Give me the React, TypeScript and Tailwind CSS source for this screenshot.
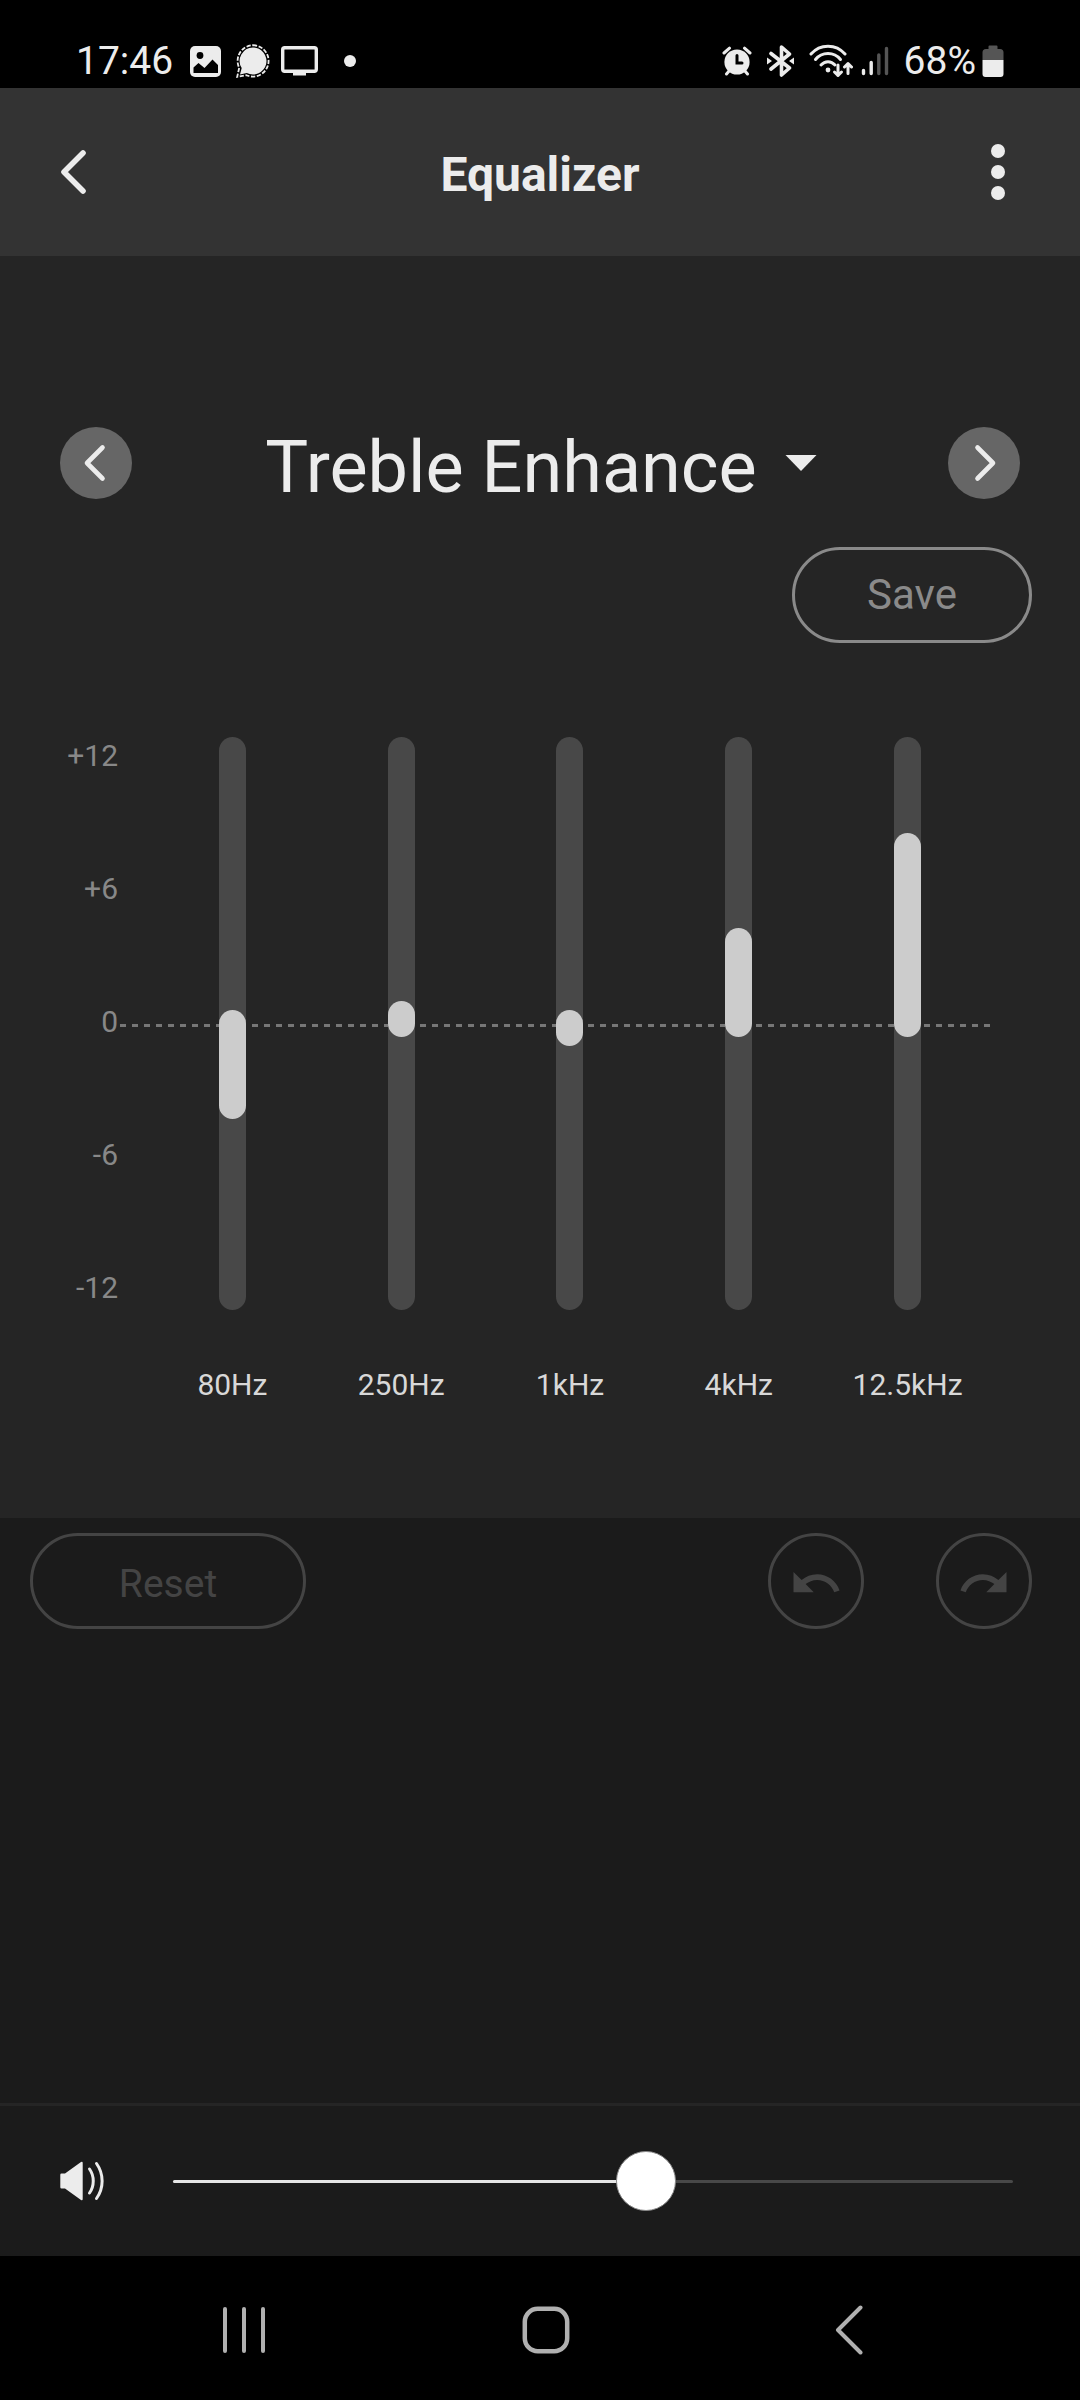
import { useState } from "react";

type Band = { id: string; label: string; gain: number };

const PRESETS = ["Treble Enhance", "Bass Enhance", "Flat"];

const INITIAL_BANDS: Band[] = [
  { id: "band-80", label: "80Hz", gain: -3.6 },
  { id: "band-250", label: "250Hz", gain: 0.4 },
  { id: "band-1k", label: "1kHz", gain: -0.4 },
  { id: "band-4k", label: "4kHz", gain: 3.6 },
  { id: "band-12k", label: "12.5kHz", gain: 7.8 },
];

const GAIN_LABELS = ["+12", "+6", "0", "-6", "-12"];

// track is 573px tall with 27px round caps, so 273px of travel each way
const TRAVEL = 273;
const CAP = 27;

function StatusBar() {
  return (
    <div className="flex h-[88px] items-center justify-between bg-black pt-[34px] pr-[76px] pl-[76px] text-[39px] leading-none text-[#ececec]">
      <div className="flex items-center">
        <span>17:46</span>
        <svg className="ml-[17px]" width="31" height="31" viewBox="0 0 31 31">
          <rect width="31" height="31" rx="5" fill="#ececec" />
          <circle cx="10" cy="9.5" r="3.4" fill="#000" />
          <path d="M3.5 27V21.5L8.5 17L14.5 22L22.5 13.5L28 19V27Z" fill="#000" />
        </svg>
        <svg className="ml-[15px]" width="34" height="34" viewBox="0 0 34 34">
          <path
            d="M17 3.5a13.5 13.5 0 1 1-6.2 25.5L4 30.5l1.7-6.4A13.5 13.5 0 0 1 17 3.5Z"
            fill="#ececec"
          />
          <path
            d="M17 1.2a15.7 15.7 0 1 1-6.6 30L1.2 32.8l2-9A15.7 15.7 0 0 1 17 1.2Z"
            fill="none"
            stroke="#ececec"
            strokeWidth="1.8"
            strokeDasharray="4.2 1.6"
          />
        </svg>
        <svg className="ml-[11px]" width="37" height="30" viewBox="0 0 37 30">
          <rect x="1.7" y="1.7" width="33.6" height="23.6" rx="2" fill="none" stroke="#ececec" strokeWidth="3.4" />
          <rect x="12" y="25" width="13" height="4.5" fill="#ececec" />
        </svg>
        <span className="ml-[26px] size-3 rounded-full bg-[#ececec]" />
      </div>

      <div className="flex items-center">
        <svg width="30" height="30" viewBox="0 0 30 30">
          <circle cx="15" cy="16" r="12.6" fill="#ececec" />
          <path
            d="M2 7L7.5 2.2M28 7L22.5 2.2M4.5 28l3-3.5M25.5 28l-3-3.5"
            stroke="#ececec"
            strokeWidth="3"
            strokeLinecap="round"
          />
          <path d="M15 9.5V17H20" fill="none" stroke="#000" strokeWidth="3" strokeLinecap="round" />
        </svg>
        <svg className="ml-[15px]" width="27" height="32" viewBox="0 0 27 32">
          <path
            d="M4 8.500L22.500 23L14.500 30V2L22.500 9L4 24"
            fill="none"
            stroke="#ececec"
            strokeWidth="3.6"
            strokeLinecap="round"
            strokeLinejoin="round"
          />
          <path d="M0 12.5L5 16L0 19.5ZM27 12.5L22 16L27 19.5Z" fill="#ececec" />
        </svg>
        <svg className="ml-[15px]" width="44" height="34" viewBox="0 0 44 34">
          <g fill="none" stroke="#ececec" strokeWidth="3" strokeLinecap="round" strokeLinejoin="round">
            <path d="M2 10C11 -.5 27 -.5 36 10" />
            <path d="M6.5 15.5C13 7.5 25 7.5 31.5 15.5" />
            <path d="M12 21C16 16.5 22 16.5 26 21" />
            <path d="M29 21V31.5M25.5 28L29 31.5L32.5 28" />
            <path d="M39 29.5V19.5M35.5 23L39 19.5L42.5 23" />
          </g>
          <circle cx="19" cy="26" r="2.4" fill="#ececec" />
        </svg>
        <svg className="ml-[8px]" width="29" height="30" viewBox="0 0 29 30">
          <g strokeWidth="3.4" strokeLinecap="round">
            <path d="M2.5 24.5V27.5M10.2 16.5V27.5" stroke="#ececec" />
            <path d="M17.8 9V27.5M25.5 2.5V27.5" stroke="#555" />
          </g>
        </svg>
        <span className="ml-[14px]">68%</span>
        <svg className="ml-[6px]" width="22" height="33" viewBox="0 0 22 33">
          <path d="M6.5 1.5a1 1 0 0 1 1-1h7a1 1 0 0 1 1 1V4H18a3.5 3.5 0 0 1 3.5 3.5V15H.5V7.5A3.5 3.5 0 0 1 4 4h2.5Z" fill="#555" />
          <path d="M.5 15h21v14a3 3 0 0 1-3 3h-15a3 3 0 0 1-3-3Z" fill="#ececec" />
        </svg>
      </div>
    </div>
  );
}

function Header() {
  return (
    <header className="flex h-[168px] items-center justify-between bg-[#333] px-[60px] text-[#ececec]">
      <button type="button" aria-label="Back" className="w-[44px]">
        <svg width="28" height="46" viewBox="0 0 28 46">
          <path d="M23 4L4 23L23 42" fill="none" stroke="currentColor" strokeWidth="5.6" strokeLinecap="round" strokeLinejoin="round" />
        </svg>
      </button>
      <h1 className="pt-1.5 text-[48px] leading-none font-bold">Equalizer</h1>
      <button type="button" aria-label="More options" className="flex w-[44px] flex-col items-center gap-[7px]">
        <span className="size-[14px] rounded-full bg-current" />
        <span className="size-[14px] rounded-full bg-current" />
        <span className="size-[14px] rounded-full bg-current" />
      </button>
    </header>
  );
}

function StepButton({ label, path, onClick }: { label: string; path: string; onClick: () => void }) {
  return (
    <button
      type="button"
      aria-label={label}
      onClick={onClick}
      className="flex size-[72px] shrink-0 items-center justify-center rounded-full bg-[#666]"
    >
      <svg width="28" height="40" viewBox="0 0 28 40">
        <path d={path} fill="none" stroke="#ececec" strokeWidth="4.6" strokeLinecap="round" strokeLinejoin="round" />
      </svg>
    </button>
  );
}

function BandSlider({ band, onChange }: { band: Band; onChange: (gain: number) => void }) {
  const size = (Math.abs(band.gain) / 12) * TRAVEL;
  const top = band.gain > 0 ? TRAVEL - size : TRAVEL;

  return (
    <div className="flex flex-col items-center">
      <div className="relative h-[573px] w-[27px] overflow-hidden rounded-full bg-[#484848]">
        <div
          className="absolute w-full rounded-full bg-[#ccc]"
          style={{ top, height: size + CAP }}
        />
        <input
          id={band.id}
          type="range"
          min={-12}
          max={12}
          step={0.1}
          value={band.gain}
          onChange={(e) => onChange(Number(e.target.value))}
          className="absolute inset-0 h-full w-full opacity-0 [direction:rtl] [writing-mode:vertical-lr]"
        />
      </div>
      <label htmlFor={band.id} className="mt-[57px] text-[30px] leading-9 text-[#d8d8d8]">
        {band.label}
      </label>
    </div>
  );
}

function VolumeBar() {
  const [volume, setVolume] = useState(56.25);

  return (
    <div className="flex h-[153px] items-center border-t-3 border-[#252525] pr-[67px] pl-[60px]">
      <label htmlFor="volume" aria-label="Volume" className="mr-[69px]">
        <svg width="44" height="40" viewBox="0 0 44 40">
          <path d="M1.5 12.5H5L21 1Q22.7 0 22.7 2V38Q22.7 40 21 39L5 27.5H1.5Q.3 27.5 .3 26.3V13.7Q.3 12.5 1.5 12.5Z" fill="#ececec" />
          <g fill="none" stroke="#ececec" strokeWidth="3" strokeLinecap="round">
            <path d="M29.5 8C34.5 15 34.5 25 29.5 32" />
            <path d="M36.5 2.5C44 13 44 27 36.5 37.5" />
          </g>
        </svg>
      </label>
      <div className="relative flex-1">
        <div className="h-[3px] rounded-full bg-[#484848]">
          <div className="h-full rounded-full bg-[#e6e6e6]" style={{ width: `${volume}%` }} />
        </div>
        {/* overhangs by half a thumb so the thumb centre runs the full line */}
        <div className="absolute -inset-x-[30px] -inset-y-[30px] flex items-center">
          <input
            id="volume"
            type="range"
            min={0}
            max={100}
            step={0.25}
            value={volume}
            onChange={(e) => setVolume(Number(e.target.value))}
            className="h-[60px] w-full appearance-none bg-transparent outline-none [&::-webkit-slider-thumb]:size-[60px] [&::-webkit-slider-thumb]:appearance-none [&::-webkit-slider-thumb]:rounded-full [&::-webkit-slider-thumb]:border [&::-webkit-slider-thumb]:border-[#888] [&::-webkit-slider-thumb]:bg-white"
          />
        </div>
      </div>
    </div>
  );
}

function NavBar() {
  return (
    <nav className="grid h-[144px] grid-cols-3 bg-black pr-[80px] pl-[93px] text-[#b0b0b0]">
      <button type="button" aria-label="Recent apps" className="flex items-center justify-center pt-1">
        <svg width="44" height="48" viewBox="0 0 44 48">
          <path d="M3 3V45M22 3V45M41 3V45" stroke="currentColor" strokeWidth="4" strokeLinecap="round" />
        </svg>
      </button>
      <button type="button" aria-label="Home" className="flex items-center justify-center pt-1">
        <svg width="48" height="48" viewBox="0 0 48 48">
          <rect x="2.8" y="2.8" width="42.4" height="42.4" rx="13" fill="none" stroke="currentColor" strokeWidth="4.5" />
        </svg>
      </button>
      <button type="button" aria-label="Back" className="flex items-center justify-center pt-1">
        <svg width="28" height="50" viewBox="0 0 28 50">
          <path d="M25.5 2.5L3 25L25.5 47.5" fill="none" stroke="currentColor" strokeWidth="4" strokeLinecap="round" strokeLinejoin="round" />
        </svg>
      </button>
    </nav>
  );
}

export default function App() {
  const [preset, setPreset] = useState(0);
  const [bands, setBands] = useState(INITIAL_BANDS);

  const stepPreset = (by: number) => setPreset((preset + by + PRESETS.length) % PRESETS.length);
  const setGain = (id: string, gain: number) =>
    setBands(bands.map((b) => (b.id === id ? { ...b, gain } : b)));

  return (
    <div className="flex min-h-screen flex-col bg-[#1b1b1b] font-['Roboto',sans-serif]">
      <StatusBar />
      <Header />

      <main className="flex flex-1 flex-col">
        <section className="bg-[#252525] pt-[171px] pb-[115px]">
          <div className="flex h-[72px] items-center justify-between px-[60px]">
            <StepButton label="Previous preset" path="M20.5 4.5L5 20L20.5 35.5" onClick={() => stepPreset(-1)} />
            <div className="flex items-center gap-[28px] pl-[2px] text-[#ececec]">
              <select
                aria-label="Preset"
                value={preset}
                onChange={(e) => setPreset(Number(e.target.value))}
                className="appearance-none bg-transparent pt-2.5 text-[72px] leading-[84px] outline-none [field-sizing:content]"
              >
                {PRESETS.map((name, i) => (
                  <option key={name} value={i}>
                    {name}
                  </option>
                ))}
              </select>
              <svg width="32" height="16" viewBox="0 0 32 16">
                <path d="M.5 0H31.5L16 16Z" fill="currentColor" />
              </svg>
            </div>
            <StepButton label="Next preset" path="M7.5 4.5L23 20L7.5 35.5" onClick={() => stepPreset(1)} />
          </div>

          <div className="flex justify-end pt-12 pr-12">
            <button
              type="button"
              className="h-24 w-[240px] rounded-full border-3 border-[#8a8a8a] text-[42px] leading-none text-[#8a8a8a]"
            >
              Save
            </button>
          </div>

          <div className="relative mt-[94px] flex pr-[88px]">
            <div className="absolute top-[287px] right-[90px] left-[120px] h-[3px] bg-[repeating-linear-gradient(90deg,#777_0_6px,transparent_6px_12px)]" />
            <div className="flex h-[573px] w-[148px] flex-col justify-between pt-px pr-[30px] pb-1 text-right text-[30px] leading-9 text-[#888]">
              {GAIN_LABELS.map((label) => (
                <span key={label}>{label}</span>
              ))}
            </div>
            <div className="grid flex-1 grid-cols-5">
              {bands.map((band) => (
                <BandSlider key={band.id} band={band} onChange={(gain) => setGain(band.id, gain)} />
              ))}
            </div>
          </div>
        </section>

        <div className="flex items-center justify-between pt-[15px] pr-12 pl-[30px] text-[#444]">
          <button
            type="button"
            className="h-24 w-[276px] rounded-full border-3 border-current pt-1.5 text-[39px] leading-none"
          >
            Reset
          </button>
          <div className="flex gap-[72px]">
            <button
              type="button"
              aria-label="Undo"
              className="flex size-24 items-center justify-center rounded-full border-3 border-current"
            >
              <svg width="54" height="54" viewBox="0 -1 24 24" fill="currentColor">
                <path d="M12.5 8c-2.65 0-5.05.99-6.9 2.6L2 7v9h9l-3.62-3.62c1.39-1.16 3.16-1.88 5.12-1.88 3.54 0 6.55 2.31 7.6 5.5l2.37-.78C21.08 11.03 17.15 8 12.5 8z" />
              </svg>
            </button>
            <button
              type="button"
              aria-label="Redo"
              className="flex size-24 items-center justify-center rounded-full border-3 border-current"
            >
              <svg width="54" height="54" viewBox="0 -1 24 24" fill="currentColor">
                <path d="M18.4 10.6C16.55 8.99 14.15 8 11.5 8c-4.65 0-8.58 3.03-9.96 7.22L3.9 16c1.05-3.19 4.05-5.5 7.6-5.5 1.95 0 3.73.72 5.12 1.88L13 16h9V7l-3.6 3.6z" />
              </svg>
            </button>
          </div>
        </div>
      </main>

      <VolumeBar />
      <NavBar />
    </div>
  );
}
